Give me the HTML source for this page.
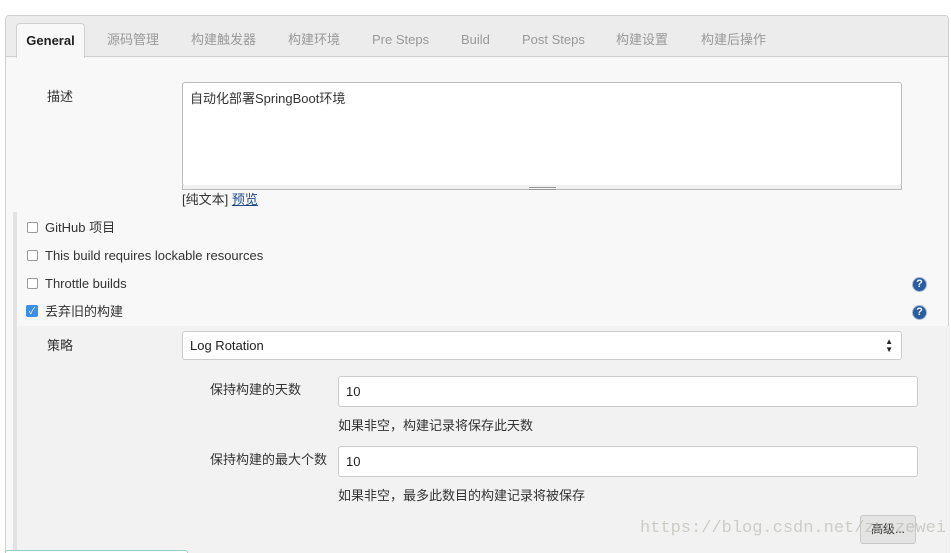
<!DOCTYPE html>
<html><head><meta charset="utf-8"><style>
*{box-sizing:border-box}
html,body{margin:0;width:951px;height:553px;overflow:hidden}
body{background:#fff;font-family:"Liberation Sans","Noto Sans CJK SC",sans-serif;font-size:13px;line-height:15px;color:#333;position:relative}
.a{position:absolute;white-space:nowrap}
.panel{left:5px;top:15px;width:944px;height:560px;border:1px solid #d0d0d0;border-radius:4px;background:#f8f8f8;overflow:hidden}
.tabs{left:0;top:0;width:100%;height:41px;background:#ececec;border-bottom:1px solid #d0d0d0}
.tab{top:16px;font-size:13px;color:#999}
.gen{left:10px;top:7px;width:69px;height:35px;background:#f8f8f8;border:1px solid #d0d0d0;border-bottom:none;border-radius:4px 4px 0 0;font-weight:bold;color:#222;text-align:center;padding-top:9px}
.cb{width:11px;height:11px;border:1px solid #999;border-radius:2px;background:#fff}
.inp{background:#fff;border:1px solid #ccc;border-radius:3px;padding-left:7px}
.help{width:15px;height:15px;border-radius:50%;background:#2a5c9e;border:1.5px solid #9fb8d8;color:#fff;font-size:11px;font-weight:bold;text-align:center;line-height:12px}
</style></head><body>
<div class="a panel">
 <div class="a tabs"></div>
 <div class="a gen">General</div>
 <div class="a tab" style="left:101px">源码管理</div>
 <div class="a tab" style="left:185px">构建触发器</div>
 <div class="a tab" style="left:282px">构建环境</div>
 <div class="a tab" style="left:366px">Pre Steps</div>
 <div class="a tab" style="left:455px">Build</div>
 <div class="a tab" style="left:516px">Post Steps</div>
 <div class="a tab" style="left:610px">构建设置</div>
 <div class="a tab" style="left:695px">构建后操作</div>
</div>
<div class="a" style="left:47px;top:89px">描述</div>
<div class="a" style="left:182px;top:82px;width:720px;height:104px;background:#fff;border:1px solid #bbb;border-radius:3px;padding:8px 7px">自动化部署SpringBoot环境</div>
<div class="a" style="left:182px;top:185px;width:720px;height:5px;background:#f0f0f0;border:1px solid #bbb;border-top:none"></div>
<div class="a" style="left:529px;top:187px;width:27px;height:3px;border-top:1px solid #999;border-bottom:1px solid #999"></div>
<div class="a" style="left:182px;top:192px">[纯文本] <span style="color:#204a87;text-decoration:underline">预览</span></div>
<div class="a" style="left:13px;top:212px;width:4px;height:341px;background:#e2e2e2"></div>
<div class="a cb" style="left:27px;top:222px"></div><div class="a" style="left:45px;top:220px">GitHub 项目</div>
<div class="a cb" style="left:27px;top:250px"></div><div class="a" style="left:45px;top:248px">This build requires lockable resources</div>
<div class="a cb" style="left:27px;top:278px"></div><div class="a" style="left:45px;top:276px">Throttle builds</div>
<div class="a help" style="left:912px;top:277px">?</div>
<div class="a" style="left:26px;top:305px;width:12px;height:12px;border-radius:2px;background:#3a8ee6;color:#fff;font-size:9px;text-align:center;line-height:12px">✓</div>
<div class="a" style="left:45px;top:304px">丢弃旧的构建</div>
<div class="a help" style="left:912px;top:305px">?</div>
<div class="a" style="left:17px;top:326px;width:933px;height:227px;background:#f2f2f2"></div>
<div class="a" style="left:47px;top:338px">策略</div>
<div class="a inp" style="left:182px;top:331px;width:720px;height:29px;padding-top:6px;color:#222">Log Rotation<span class="a" style="right:8px;top:6px;font-size:8px;line-height:8px">▲<br>▼</span></div>
<div class="a" style="left:210px;top:382px">保持构建的天数</div>
<div class="a inp" style="left:338px;top:376px;width:580px;height:31px;padding-top:7px;color:#222">10</div>
<div class="a" style="left:338px;top:418px">如果非空，构建记录将保存此天数</div>
<div class="a" style="left:210px;top:452px">保持构建的最大个数</div>
<div class="a inp" style="left:338px;top:446px;width:580px;height:31px;padding-top:7px;color:#222">10</div>
<div class="a" style="left:338px;top:488px">如果非空，最多此数目的构建记录将被保存</div>
<div class="a" style="left:860px;top:515px;width:56px;height:29px;background:#e4e4e4;border:1px solid #c8c8c8;border-radius:3px;text-align:center;padding-top:6px;font-size:12px">高级...</div>
<div class="a" style="left:640px;top:518px;font-family:'Liberation Mono',monospace;font-size:17px;line-height:22px;color:rgba(180,180,170,0.6)">https://blog.csdn.net/zuozewei</div>
<div class="a" style="left:5px;top:550px;width:183px;height:10px;border:1px solid #9cc;border-radius:3px;background:#fff"></div>
</body></html>
